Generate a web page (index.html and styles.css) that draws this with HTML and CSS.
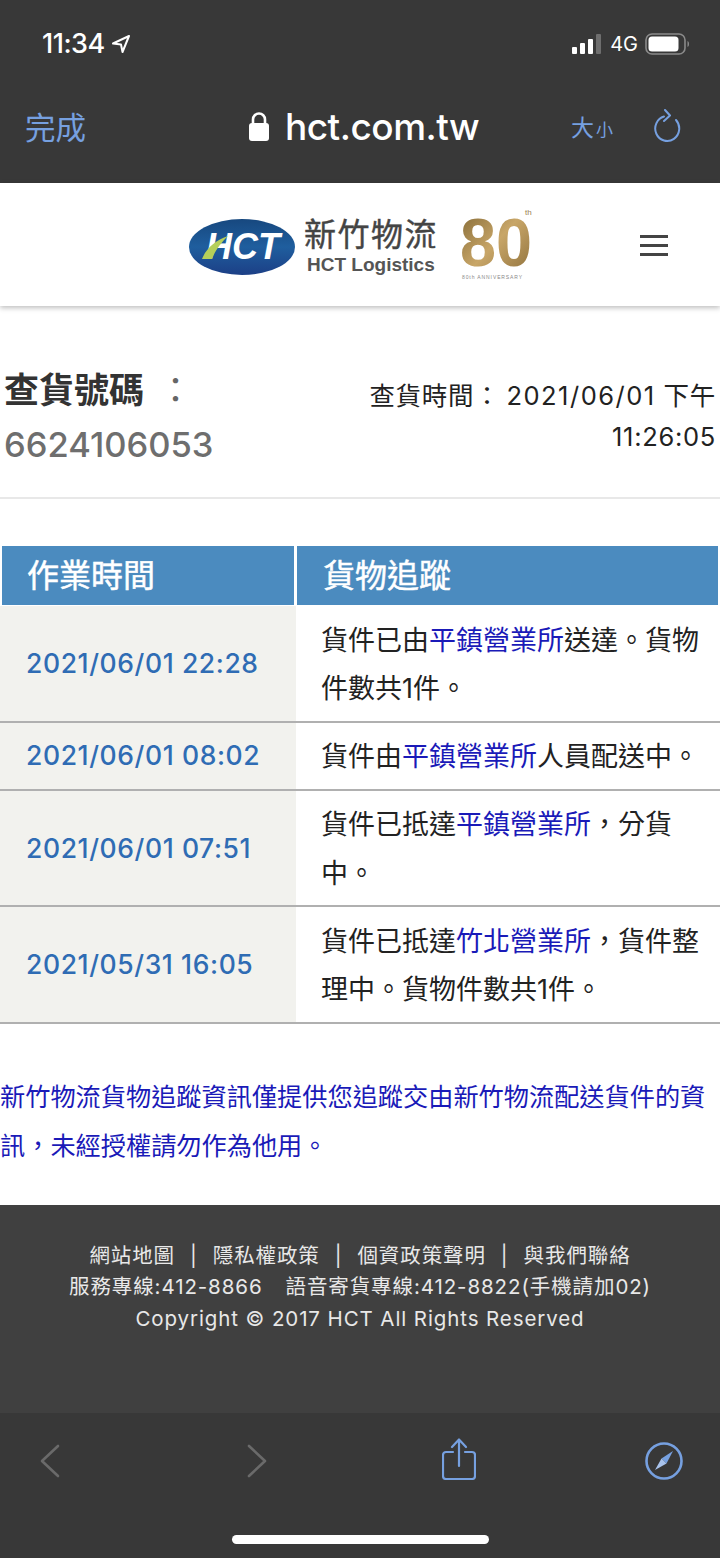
FILE: index.html
```html
<!DOCTYPE html>
<html lang="zh-Hant">
<head>
    <meta charset="UTF-8">
    <meta name="viewport" content="width=device-width, initial-scale=1.0">
    <title>貨物追蹤 | HCT</title>
    <link rel="stylesheet" href="styles.css">
</head>
<body>
    <div class="phone-top">
        <div class="status-bar">
            <div class="status-left">
                <span class="clock">11:34</span>
                <svg class="location" width="20" height="20" viewBox="0 0 20 20"><path d="M18 2 L2 9.500 L10 10.500 L11.500 18 Z" fill="none" stroke="#fff" stroke-width="2" stroke-linejoin="round"/></svg>
            </div>
            <div class="status-right">
                <svg width="32" height="20" viewBox="0 0 32 20">
                    <rect x="1" y="13" width="5" height="7" rx="1" fill="#fff"/>
                    <rect x="9" y="9" width="5" height="11" rx="1" fill="#fff"/>
                    <rect x="17" y="5" width="5" height="15" rx="1" fill="#fff"/>
                    <rect x="25" y="0" width="5" height="20" rx="1" fill="#6e6e6e"/>
                </svg>
                <span class="network">4G</span>
                <svg width="46" height="22" viewBox="0 0 46 22">
                    <rect x="1" y="1" width="39" height="20" rx="6" fill="none" stroke="#8a8a8a" stroke-width="1.600"/>
                    <rect x="3.500" y="3.500" width="30" height="15" rx="3.500" fill="#fff"/>
                    <path d="M42.500 8 C44.500 8.500 44.500 13.500 42.500 14 Z" fill="#8a8a8a"/>
                </svg>
            </div>
        </div>
        <div class="address-bar">
            <span class="done">完成</span>
            <div class="address">
                <svg width="22" height="31" viewBox="0 0 22 31"><path d="M5 14 V8.500 a6 6 0 0 1 12 0 V14" fill="none" stroke="#fff" stroke-width="2.600"/><rect x="1" y="12" width="20" height="18" rx="3" fill="#fff"/></svg>
                <span class="domain">hct.com.tw</span>
            </div>
            <div class="address-actions">
                <span class="text-size"><span class="big">大</span><span class="small">小</span></span>
                <svg class="reload" width="28" height="34" viewBox="0 0 28 34"><path d="M11 7.500 A12 12.500 0 1 0 23 11 M12 1 L17 6.500 L11 12" fill="none" stroke="#76a0e0" stroke-width="2" stroke-linecap="round" stroke-linejoin="round"/></svg>
            </div>
        </div>
    </div>

    <header class="site-header">
        <svg class="logo" width="350" height="92" viewBox="0 0 350 92">
            <defs>
                <linearGradient id="oval" x1="0" y1="0" x2="0" y2="1">
                    <stop offset="0" stop-color="#17487f"/>
                    <stop offset="0.5" stop-color="#1f5e9e"/>
                    <stop offset="1" stop-color="#1c3f86"/>
                </linearGradient>
                <linearGradient id="gold" x1="0" y1="0" x2="1" y2="1">
                    <stop offset="0" stop-color="#7d6330"/>
                    <stop offset="0.5" stop-color="#c8a668"/>
                    <stop offset="1" stop-color="#8a6c38"/>
                </linearGradient>
            </defs>
            <ellipse cx="54" cy="48" rx="53" ry="28" fill="url(#oval)"/>
            <text class="logo-hct" x="55" y="60" text-anchor="middle">HCT</text>
            <path d="M14 60 C18 50 26 42 40 37 C33 44 28 50 24 60 Z" fill="#b5cf5a"/>
            <text class="logo-zh" x="116" y="47">新竹物流</text>
            <text class="logo-en" x="119" y="72">HCT Logistics</text>
            <text class="logo-80" x="272" y="67" textLength="72" lengthAdjust="spacingAndGlyphs">80</text>
            <text class="logo-th" x="337" y="16">th</text>
            <text class="logo-sub" x="274" y="80">80th ANNIVERSARY</text>
        </svg>
        <button class="menu-button" aria-label="menu"><span></span><span></span><span></span></button>
    </header>

    <main class="tracking">
        <div class="query-info">
            <div class="query-number">
                <h1>查貨號碼<span class="colon">：</span></h1>
                <p class="number">6624106053</p>
            </div>
            <p class="query-time">查貨時間：<span class="date">2021/06/01</span> 下午<br>11:26:05</p>
        </div>

        <table class="track-table">
            <thead>
                <tr>
                    <th class="col-time">作業時間</th>
                    <th>貨物追蹤</th>
                </tr>
            </thead>
            <tbody>
                <tr>
                    <td class="col-time">2021/06/01 22:28</td>
                    <td>貨件已由<a href="#">平鎮營業所</a>送達。貨物件數共1件。</td>
                </tr>
                <tr>
                    <td class="col-time">2021/06/01 08:02</td>
                    <td>貨件由<a href="#">平鎮營業所</a>人員配送中。</td>
                </tr>
                <tr>
                    <td class="col-time">2021/06/01 07:51</td>
                    <td>貨件已抵達<a href="#">平鎮營業所</a>，分貨中。</td>
                </tr>
                <tr>
                    <td class="col-time">2021/05/31 16:05</td>
                    <td>貨件已抵達<a href="#">竹北營業所</a>，貨件整理中。貨物件數共1件。</td>
                </tr>
            </tbody>
        </table>

        <p class="notice">新竹物流貨物追蹤資訊僅提供您追蹤交由新竹物流配送貨件的資訊，未經授權請勿作為他用。</p>
    </main>

    <footer class="site-footer">
        <p>網站地圖<span class="sep">|</span>隱私權政策<span class="sep">|</span>個資政策聲明<span class="sep">|</span>與我們聯絡</p>
        <p>服務專線:412-8866<span class="gap"></span>語音寄貨專線:412-8822(手機請加02)</p>
        <p>Copyright © 2017 HCT All Rights Reserved</p>
    </footer>

    <nav class="toolbar">
        <div class="toolbar-icons">
            <div class="tool"><svg width="22" height="34" viewBox="0 0 22 34"><path d="M19 2 L3 17 L19 32" fill="none" stroke="#6a6a6a" stroke-width="2.600" stroke-linecap="round" stroke-linejoin="round"/></svg></div>
            <div class="tool"><svg class="forward" width="22" height="34" viewBox="0 0 22 34"><path d="M3 2 L19 17 L3 32" fill="none" stroke="#6a6a6a" stroke-width="2.600" stroke-linecap="round" stroke-linejoin="round"/></svg></div>
            <div class="tool"><svg class="share" width="34" height="42" viewBox="0 0 34 42"><path d="M11 14 H4 a3 3 0 0 0 -3 3 V38 a3 3 0 0 0 3 3 H30 a3 3 0 0 0 3 -3 V17 a3 3 0 0 0 -3 -3 H23 M17 28 V2 M10 9 L17 1.500 L24 9" fill="none" stroke="#76a0e0" stroke-width="2.200" stroke-linecap="round" stroke-linejoin="round"/></svg></div>
            <div class="tool"><svg width="38" height="38" viewBox="0 0 38 38"><circle cx="19" cy="19" r="17.500" fill="none" stroke="#76a0e0" stroke-width="2.600"/><path d="M28 9 L21.500 21.500 L16.500 16.500 Z" fill="#76a0e0"/><path d="M10 28 L16.500 16.500 L21.500 21.500 Z" fill="#a9c3ec"/></svg></div>
        </div>
        <div class="home-indicator"></div>
    </nav>
</body>
</html>
```

FILE: styles.css
```css
body {
    font-family: Inter, "Noto Sans CJK TC", sans-serif;
    margin: 0;
    padding: 0;
    background-color: white;
    color: #333;
}

.phone-top {
    background-color: #383838;
    height: 183px;
    color: white;
}

.status-bar {
    display: flex;
    justify-content: space-between;
    align-items: center;
    padding: 27px 29px 0 42px;
    height: 33px;
}

.status-left {
    display: flex;
    align-items: center;
    gap: 6px;
}

.clock {
    font-size: 27px;
    font-weight: 500;
    letter-spacing: -0.500px;
}

.status-right {
    display: flex;
    align-items: center;
    gap: 7px;
}

.network {
    font-size: 20px;
}

.address-bar {
    display: flex;
    align-items: center;
    padding: 0 39px 0 25px;
    margin-top: 41px;
    height: 50px;
}

.done {
    color: #76a0e0;
    font-size: 30.500px;
    width: 223px;
}

.address {
    display: flex;
    align-items: center;
    gap: 15px;
}

.domain {
    font-size: 37px;
    font-weight: 500;
    letter-spacing: -0.500px;
}

.address-actions {
    display: flex;
    align-items: center;
    gap: 40px;
    margin-left: auto;
}

.text-size {
    color: #76a0e0;
    display: flex;
    align-items: baseline;
    gap: 2px;
}

.text-size .big {
    font-size: 23px;
}

.text-size .small {
    font-size: 17px;
}

.site-header {
    height: 123px;
    background-color: white;
    box-shadow: 0 2px 5px rgba(0, 0, 0, 0.25);
    position: relative;
    display: flex;
    align-items: center;
    padding-left: 188px;
    box-sizing: border-box;
}

.logo text {
    font-family: "Liberation Sans", "Noto Sans CJK TC", sans-serif;
}

.logo-hct {
    font-size: 36px;
    font-weight: bold;
    font-style: italic;
    fill: white;
}

.logo-zh {
    font-size: 32px;
    letter-spacing: 1.500px;
    fill: #444;
    stroke: #444;
    stroke-width: 0.400px;
}

.logo-en {
    font-size: 19px;
    font-weight: bold;
    fill: #555;
}

.logo-80 {
    font-size: 68px;
    font-weight: bold;
    fill: url(#gold);
}

.logo-th {
    font-size: 8px;
    fill: #9a8250;
}

.logo-sub {
    font-size: 5px;
    letter-spacing: 0.900px;
    fill: #888;
}

.menu-button {
    position: absolute;
    top: 52px;
    right: 52px;
    width: 28px;
    background: none;
    border: none;
    padding: 0;
    display: flex;
    flex-direction: column;
    gap: 6px;
}

.menu-button span {
    display: block;
    height: 3px;
    background-color: #444;
}

.query-info {
    display: flex;
    justify-content: space-between;
    padding: 61px 4px 0 4px;
    height: 130px;
    border-bottom: 2px solid #e8e8e8;
}

h1 {
    font-size: 35px;
    margin: 0;
    line-height: 46px;
    color: #333;
}

.colon {
    font-weight: normal;
    color: #666;
    margin-left: 14px;
}

.number {
    font-size: 34.500px;
    font-weight: 500;
    color: #6e6e6e;
    margin: 12px 0 0;
    line-height: 40px;
}

.query-time {
    font-size: 25.500px;
    letter-spacing: 0.700px;
    line-height: 41px;
    margin: 8px 0 0;
    text-align: right;
    color: #222;
}

.query-time .date {
    letter-spacing: 1.500px;
    margin-left: 6px;
}

.track-table {
    width: 720px;
    margin: 47px 0 0;
    border-collapse: separate;
    border-spacing: 0;
    table-layout: fixed;
}

.track-table th {
    background-color: #4b8bbf;
    color: white;
    font-size: 32px;
    font-weight: normal;
    -webkit-text-stroke: 0.500px white;
    text-align: left;
    height: 54px;
    padding: 0 0 5px 26px;
    border-left: 1px solid white;
    border-right: 2px solid white;
    border-bottom: 1px solid white;
}

.track-table th.col-time {
    width: 267px;
    padding-left: 25px;
    border-left: 2px solid white;
    border-right: 2px solid white;
}

.track-table td {
    font-size: 27px;
    line-height: 48.500px;
    color: #222;
    padding: 10.500px 0 7px 25px;
    border-bottom: 2px solid #b0b0b0;
}

.track-table td.col-time {
    background-color: #f2f2ee;
    color: #2f6cb4;
    font-size: 26.500px;
    font-weight: 500;
    letter-spacing: 0.600px;
    padding: 0 0 0 26px;
}

.track-table a {
    color: #1a1ab8;
    text-decoration: none;
}

.notice {
    color: #1a1ab8;
    font-size: 25.200px;
    line-height: 49px;
    margin: 49px 0 0;
    height: 132px;
}

.site-footer {
    background-color: #404040;
    color: #e8e8e8;
    height: 208px;
    box-sizing: border-box;
    padding-top: 35px;
    text-align: center;
    font-size: 20.500px;
    letter-spacing: 0.900px;
}

.site-footer p {
    margin: 0;
    line-height: 31.500px;
}

.sep {
    margin: 0 15px;
}

.gap {
    display: inline-block;
    width: 23px;
}

.toolbar {
    background-color: #383838;
    height: 145px;
    box-sizing: border-box;
    padding-top: 25px;
}

.toolbar-icons {
    display: flex;
    gap: 104.500px;
    align-items: center;
    height: 46px;
}

.tool {
    width: 100px;
    display: flex;
    justify-content: center;
}

.forward {
    margin-left: 5px;
}

.share {
    margin-bottom: 4px;
}

.home-indicator {
    width: 257px;
    height: 9px;
    border-radius: 5px;
    background-color: white;
    margin: 51px auto 0;
}
```
